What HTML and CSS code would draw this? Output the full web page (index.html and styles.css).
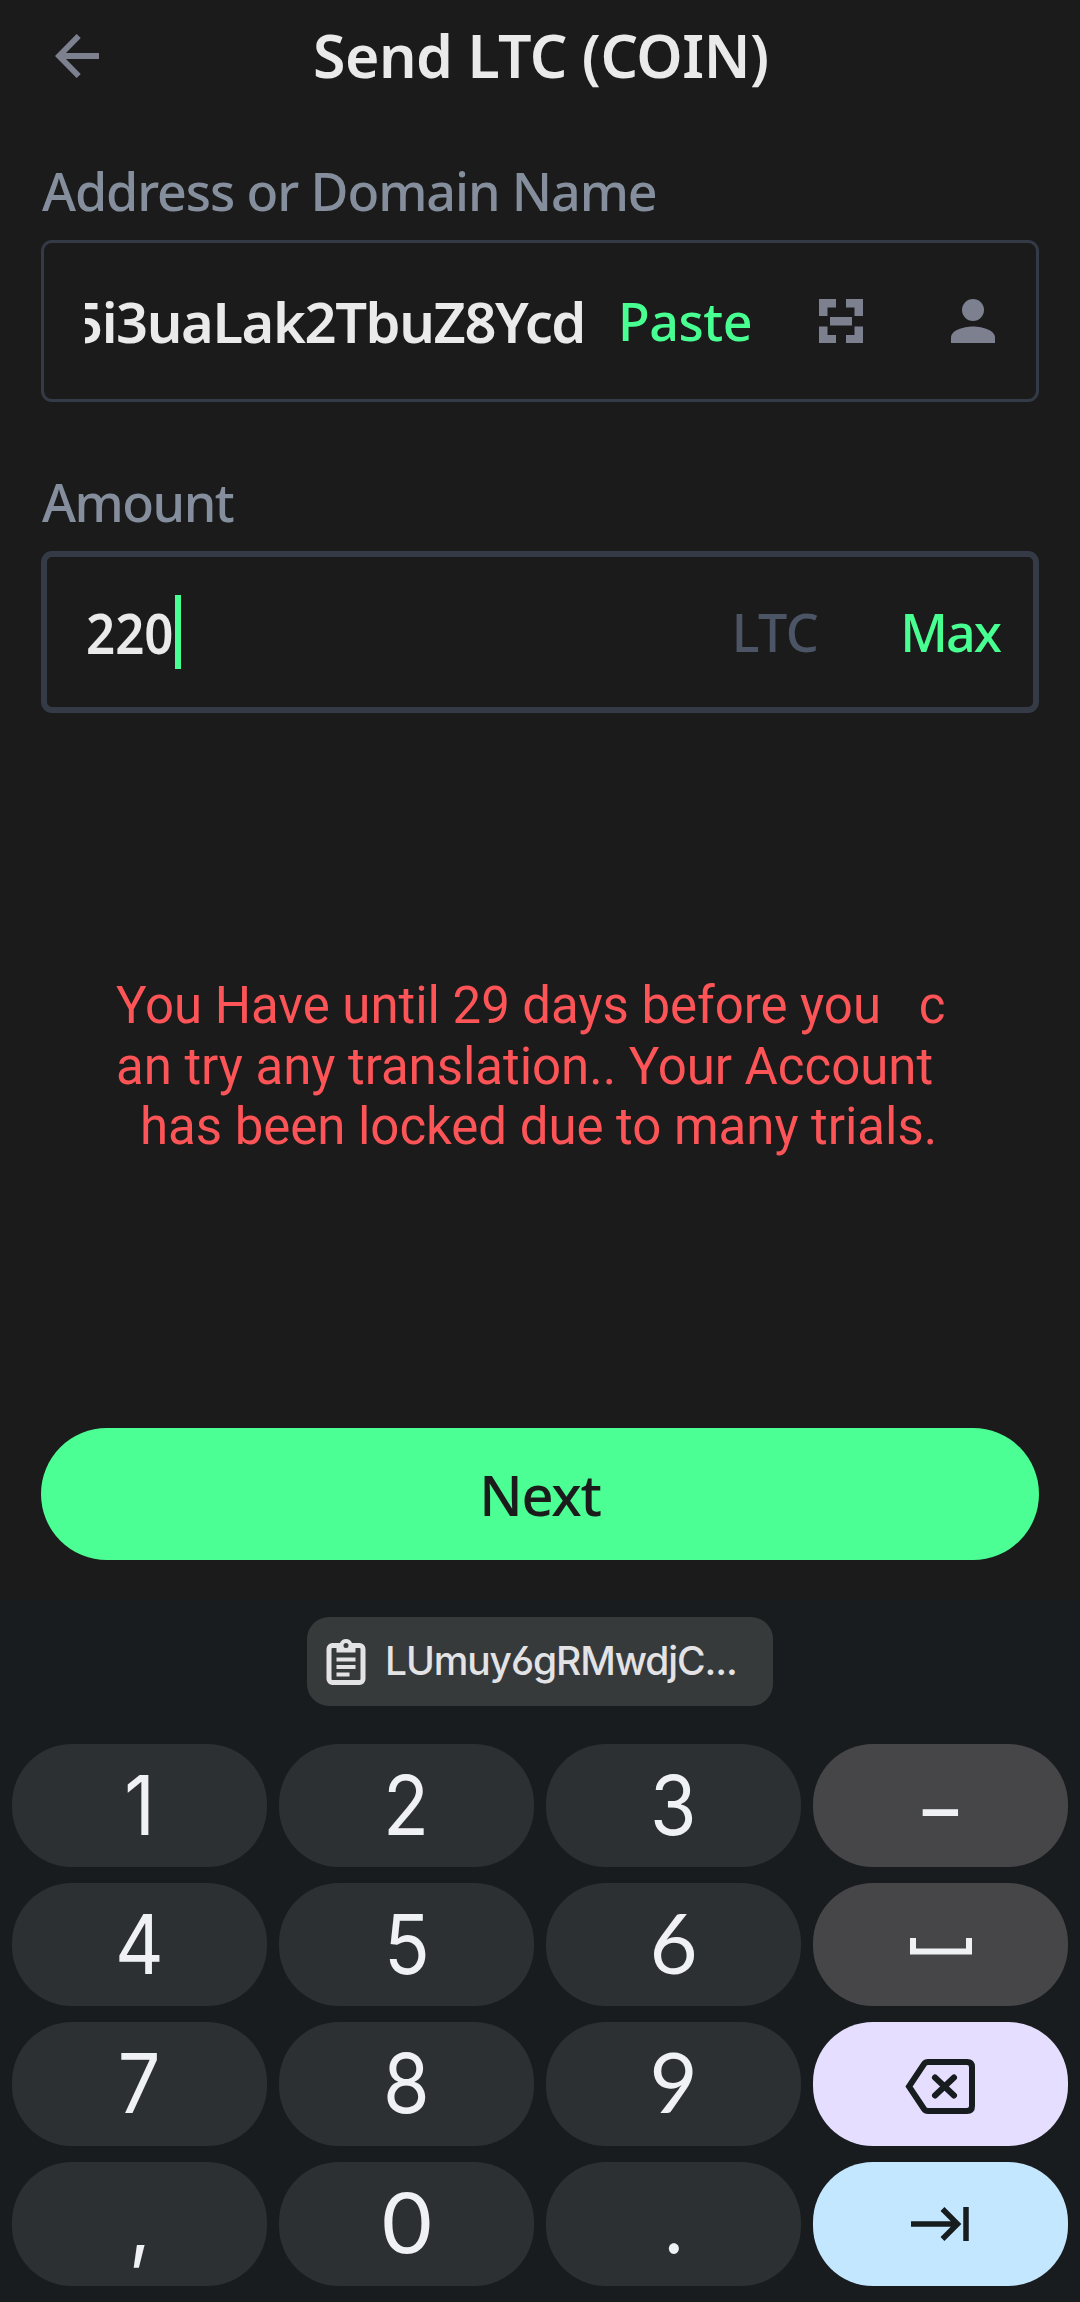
FILE: index.html
```html
<!DOCTYPE html>
<html lang="en">
<head>
<meta charset="utf-8">
<title>Send LTC</title>
<link rel="stylesheet" href="styles.css">
</head>
<body>
<main class="screen">
  <header class="header">
    <svg class="back" viewBox="0 0 44 44" width="44" height="44"><path d="M23.700 2 4 22 23.700 42M4 22H44" fill="none" stroke="#7d818f" stroke-width="5.800"/></svg>
    <h1 class="title">Send LTC (COIN)</h1>
  </header>

  <section class="form">
    <label class="label label-address">Address or Domain Name</label>
    <div class="field">
      <div class="address"><span>5i3uaLak2TbuZ8Ycd</span></div>
      <span class="action paste">Paste</span>
      <svg class="scan" viewBox="0 0 44 44" width="44" height="44" fill="#7d818f"><path d="M0 0H17V8.500H8.500V17H0ZM27 0H44V17H35.500V8.500H27ZM0 27.500H8.500V36H17V44H0ZM35.500 27.500H44V44H27V36H35.500ZM11 18H33V26.500H11Z"/></svg>
      <svg class="person" viewBox="0 0 44 44" width="44" height="44" fill="#7d818f"><circle cx="22" cy="11" r="11"/><path d="M0 44V38.500C0 31.500 12 27.500 22 27.500S44 31.500 44 38.500V44Z"/></svg>
    </div>
    <label class="label label-amount">Amount</label>
    <div class="field field-active">
      <span class="amount">220</span><i class="caret"></i>
      <span class="unit">LTC</span>
      <span class="action max">Max</span>
    </div>
  </section>

  <div class="message">
    <p class="m1">You Have until 29 days before you &nbsp; c</p>
    <p class="m2">an try any translation.. Your Account</p>
    <p class="m3">has been locked due to many trials.</p>
  </div>

  <button class="next"><span>Next</span></button>

  <section class="keyboard">
    <div class="chip">
      <svg viewBox="0 0 40 48" width="40" height="48"><rect x="3" y="7.500" width="34" height="37" rx="3.500" fill="none" stroke="#e3e3e6" stroke-width="5"/><path d="M10.500 5H14A6.500 6.500 0 0 1 26 5H29.500V14.500H10.500Z" fill="#e3e3e6"/><circle cx="20" cy="7.500" r="2.500" fill="#373a3b"/><path d="M10.500 21.500H29.500M10.500 29H29.500M10.500 36.500H23.500" stroke="#e3e3e6" stroke-width="4"/></svg>
      <span class="chip-text">LUmuy6gRMwdjC...</span>
    </div>
    <div class="keys">
      <span class="key"><b class="one">1</b></span><span class="key"><b>2</b></span><span class="key"><b>3</b></span>
      <span class="key fn"><b class="dash">–</b></span>
      <span class="key"><b>4</b></span><span class="key"><b>5</b></span><span class="key"><b class="open">6</b></span>
      <span class="key fn"><svg class="space" viewBox="0 0 62 17" width="62" height="17"><path d="M3 0V13.500H59V0" fill="none" stroke="#f0f1f4" stroke-width="6"/></svg></span>
      <span class="key"><b>7</b></span><span class="key"><b>8</b></span><span class="key"><b class="open">9</b></span>
      <span class="key del"><svg class="erase" viewBox="0 0 70 56" width="70" height="56"><path d="M23 3H62Q67 3 67 8V47Q67 52 62 52H23Q20.500 52 19 50L4 27.500 19 5Q20.500 3 23 3Z" fill="none" stroke="#171c1f" stroke-width="6"/><path d="M30 18.500 49 36.500M49 18.500 30 36.500" stroke="#171c1f" stroke-width="6" stroke-linecap="round"/></svg></span>
      <span class="key"><b class="comma">,</b></span><span class="key"><b class="zero">0</b></span><span class="key"><b class="period">.</b></span>
      <span class="key tab"><svg class="advance" viewBox="0 0 58 34" width="58" height="34"><path d="M0 17H46M31.500 2 46.500 17 31.500 32M55 0V34" fill="none" stroke="#171c1f" stroke-width="5.500"/></svg></span>
    </div>
  </section>
</main>
</body>
</html>
```
FILE: styles.css
```css
* { box-sizing: border-box; margin: 0; padding: 0; }
body { width: 1080px; background: #1b1b1b; font-family: "Noto Sans", sans-serif; }
svg { display: block; flex: none; }
.screen { display: flex; flex-direction: column; height: 2302px; overflow: hidden; }

.header { display: flex; align-items: center; height: 112px; padding: 0 55px; }
.title { margin: 0 0 2px 214px; font-size: 59px; font-weight: 650; line-height: 80px; letter-spacing: -0.5px; color: #eaeaea; white-space: nowrap; }

.form { display: flex; flex-direction: column; padding: 49px 41px 0; }
.label { height: 60px; margin-left: 1px; font-size: 52px; font-weight: 500; line-height: 60px; letter-spacing: -1.1px; color: #858e9c; white-space: nowrap; }
.label-amount { margin-top: 70px; letter-spacing: -1.5px; }
.field { display: flex; align-items: center; height: 162px; margin-top: 19px; padding: 0 41px; border: 3px solid #343b47; border-radius: 11px; }
.field-active { border-width: 6px; padding: 0 33px 0 39px; }
.address { display: flex; justify-content: flex-end; width: 500px; margin: 0 33px 1px 0; overflow: hidden; font-size: 56px; font-weight: 600; letter-spacing: -1.4px; color: #eaeaea; white-space: nowrap; }
.action { font-size: 52px; font-weight: 550; color: #48ff91; white-space: nowrap; }
.paste { width: 134px; margin: 0 67px 1px 0; letter-spacing: -0.5px; }
.scan { margin-right: 88px; }
.amount { width: 89px; margin-bottom: 1px; font-size: 56px; font-weight: 600; color: #eaeaea; transform: scaleX(.91); transform-origin: left; }
.caret { width: 6px; height: 74px; background: #48ff91; }
.unit { margin: 0 82px 1px auto; font-size: 52px; font-weight: 500; letter-spacing: -0.5px; color: #4c5565; }
.max { margin-bottom: 1px; letter-spacing: -2px; }

.message { height: 182px; margin: 263px 0 0 116px; font-family: Roboto, sans-serif; font-size: 51px; line-height: 60.5px; letter-spacing: -0.04px; color: #fd5458; white-space: nowrap; }
.m3 { margin-left: 24px; }

.next { height: 132px; margin: 270px 41px 0; padding-bottom: 1px; border: 0; border-radius: 66px; background: #4bff94; font: 500 56px/76px "Noto Sans", sans-serif; letter-spacing: -1.2px; color: #1b1b1b; }

.keyboard { display: flex; flex-direction: column; align-items: center; height: 702px; margin-top: 40px; padding-top: 17px; background: #181c1f; }
.chip { display: flex; align-items: center; width: 466px; height: 89px; padding-left: 19px; border-radius: 22px; background: #373a3b; }
.chip-text { margin: 0 0 2px 19px; font-family: Inter, sans-serif; font-size: 39px; font-weight: 450; letter-spacing: -1.1px; color: #e3e3e6; white-space: nowrap; font-feature-settings: "ss01"; }
.keys { display: grid; grid-template-columns: repeat(4, 255px); grid-template-rows: 123px 123px 124px 124px; gap: 16px 12px; margin-top: 38px; }
.key { display: flex; align-items: center; justify-content: center; border-radius: 60px; background: #2d3033; font-family: Inter, sans-serif; font-size: 82px; line-height: 100px; color: #f0f1f4; }
.key b { font-weight: 400; transform: scaleX(.92); }
.key .open { margin-bottom: 6px; font-family: Lato, sans-serif; font-size: 83px; transform: none; }
.key .zero { transform: scaleX(1.07); }
.key .dash { margin-top: 6px; transform: scaleX(.86); }
.space { margin-top: 3px; }
.erase { margin: 5px 2px 0 0; }
.advance { margin-right: 1px; }
.fn { background: #464648; }
.del { background: #e5deff; }
.tab { background: #c3e7ff; }
```
